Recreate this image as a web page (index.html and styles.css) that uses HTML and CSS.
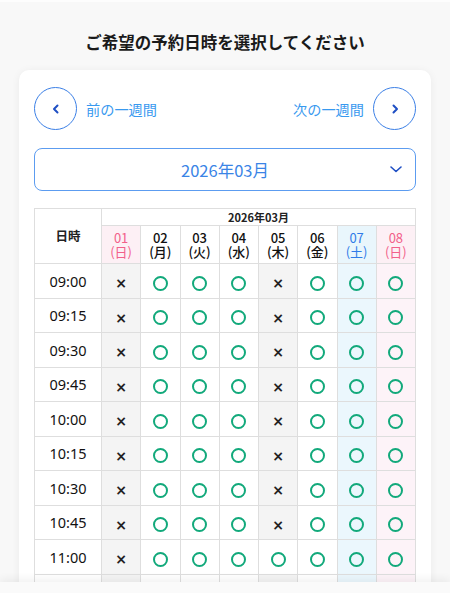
FILE: index.html
```html
<!DOCTYPE html>
<html lang="ja">
<head>
  <meta charset="UTF-8" />
  <meta name="viewport" content="width=device-width, initial-scale=1.0" />
  <title>予約日時の選択</title>
  <link rel="stylesheet" href="styles.css">
</head>
<body>
  <h2 class="page-title">ご希望の予約日時を選択してください</h2>

  <div class="card">
    <!-- Week navigation -->
    <div class="week-nav">
      <button class="nav-link" type="button">
        <span class="nav-circle">
          <svg width="12" height="12" viewBox="0 0 12 12"><path d="M7.5 2.5 L4 6 L7.5 9.5" fill="none" stroke="#1f4fc4" stroke-width="2" stroke-linecap="round" stroke-linejoin="round"/></svg>
        </span>
        <span class="nav-label">前の一週間</span>
      </button>
      <button class="nav-link" type="button">
        <span class="nav-label">次の一週間</span>
        <span class="nav-circle">
          <svg width="12" height="12" viewBox="0 0 12 12"><path d="M4.5 2.5 L8 6 L4.5 9.5" fill="none" stroke="#1f4fc4" stroke-width="2" stroke-linecap="round" stroke-linejoin="round"/></svg>
        </span>
      </button>
    </div>

    <!-- Month select -->
    <div class="month-select">
      <span class="month-value">2026年03月</span>
      <svg class="month-arrow" width="14" height="10" viewBox="0 0 14 10"><path d="M2 3 L7 7.5 L12 3" fill="none" stroke="#1f4fc4" stroke-width="1.6" stroke-linecap="round" stroke-linejoin="round"/></svg>
    </div>

    <!-- Calendar -->
    <table class="calendar" id="calendar">
      <thead>
        <tr class="month-row">
          <th rowspan="2" class="time-head">日時</th>
          <th colspan="8">2026年03月</th>
        </tr>
        <tr class="day-row">
          <th class="sun"><span>01</span><span>(日)</span></th>
          <th><span>02</span><span>(月)</span></th>
          <th><span>03</span><span>(火)</span></th>
          <th><span>04</span><span>(水)</span></th>
          <th><span>05</span><span>(木)</span></th>
          <th><span>06</span><span>(金)</span></th>
          <th class="sat"><span>07</span><span>(土)</span></th>
          <th class="sun"><span>08</span><span>(日)</span></th>
        </tr>
      </thead>
      <tbody id="slots"></tbody>
    </table>
  </div>

  <div class="bottom-bar"></div>

  <script>
    // --- build time slots ---
    const times = ["09:00", "09:15", "09:30", "09:45", "10:00", "10:15", "10:30", "10:45", "11:00", "11:15"];
    const dayTypes = ["", "", "", "", "", "", "sat", "sun"];

    function isClosed(dayIndex, time) {
      if (dayIndex === 0) return true;
      if (dayIndex === 4 && time !== "11:00") return true;
      return false;
    }

    const body = document.getElementById("slots");
    times.forEach(time => {
      const row = document.createElement("tr");
      let html = `<td class="time">${time}</td>`;
      dayTypes.forEach((type, i) => {
        if (isClosed(i, time)) {
          html += `<td class="closed"><span class="mark-x">×</span></td>`;
        } else {
          html += `<td class="${type}"><span class="mark-o"></span></td>`;
        }
      });
      row.innerHTML = html;
      body.appendChild(row);
    });
  </script>
</body>
</html>
```

FILE: styles.css
```css
/* ------------------ Global Styles ------------------ */
body {
  font-family: "Noto Sans CJK JP", "Noto Sans", sans-serif;
  background-color: #f8f8f8;
  margin: 0;
  padding: 0 19px 40px;
  color: #222;
  border-top: 2px solid #fdfdfd;
}
.page-title {
  margin: 0;
  padding: 29px 0 17px;
  text-align: center;
  font-size: 16.5px;
  font-weight: bold;
  line-height: 22px;
  color: #1a1a1a;
}
.card {
  background: #fff;
  border-radius: 10px;
  box-shadow: 0 1px 8px rgba(0,0,0,0.06);
  padding: 17px 15px 20px;
}

/* ------------------ Week navigation ------------------ */
.week-nav {
  display: flex;
  justify-content: space-between;
  align-items: center;
}
.nav-link {
  display: flex;
  align-items: center;
  gap: 9px;
  padding: 0;
  margin: 0;
  border: none;
  background: none;
  font-family: inherit;
  cursor: pointer;
}
.nav-circle {
  width: 43px;
  height: 43px;
  box-sizing: border-box;
  border: 1.3px solid #3b7fe6;
  border-radius: 50%;
  display: flex;
  align-items: center;
  justify-content: center;
}
.nav-label {
  font-size: 14.2px;
  color: #3899ef;
}

/* ------------------ Month select ------------------ */
.month-select {
  position: relative;
  margin-top: 18px;
  height: 43px;
  box-sizing: border-box;
  border: 1.5px solid #5c9cf0;
  border-radius: 8px;
  display: flex;
  align-items: center;
  justify-content: center;
}
.month-value {
  font-size: 16.5px;
  color: #3a84e6;
}
.month-arrow {
  position: absolute;
  right: 12px;
  top: 15px;
}

/* ------------------ Calendar ------------------ */
.calendar {
  width: 100%;
  margin-top: 17px;
  border-collapse: collapse;
  table-layout: fixed;
  text-align: center;
}
.calendar th, .calendar td {
  border: 1px solid #dedede;
  padding: 0;
}
.calendar .time-head {
  width: 66px;
  font-size: 12.5px;
  font-weight: bold;
}
.month-row th {
  height: 16px;
  font-size: 11px;
  font-weight: bold;
  line-height: 14px;
}
.day-row th {
  height: 37px;
  font-size: 13px;
  font-weight: 500;
  color: #111;
}
.day-row th span {
  display: block;
  line-height: 13.5px;
}
.calendar td {
  height: 33.5px;
}
.calendar td.time {
  font-family: "Noto Sans", sans-serif;
  font-size: 14.5px;
  color: #111;
}
.day-row th.sun {
  background: #fdf0f5;
  color: #f2608a;
  font-weight: normal;
}
.day-row th.sat {
  background: #e9f6fc;
  color: #2f7be8;
  font-weight: normal;
}
.calendar td.sun {
  background: #fdf3f8;
}
.calendar td.sat {
  background: #ebf7fd;
}
.calendar td.closed {
  background: #f4f4f4;
}
.mark-o {
  display: inline-block;
  vertical-align: middle;
  width: 15px;
  height: 15px;
  box-sizing: border-box;
  border: 2.2px solid #12a97b;
  border-radius: 50%;
}
.mark-x {
  display: inline-block;
  vertical-align: middle;
  line-height: 1;
  font-family: "DejaVu Sans", sans-serif;
  font-size: 14px;
  font-weight: bold;
  color: #222;
}

/* ------------------ Bottom bar ------------------ */
.bottom-bar {
  position: fixed;
  left: 0;
  right: 0;
  bottom: 0;
  height: 11px;
  background: #fafafa;
  box-shadow: 0 -3px 8px rgba(0,0,0,0.06);
}
```
